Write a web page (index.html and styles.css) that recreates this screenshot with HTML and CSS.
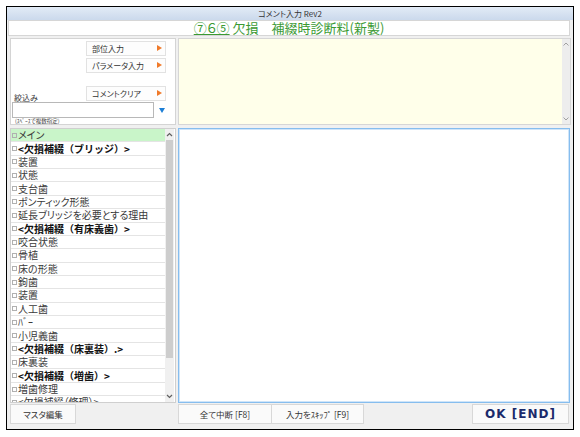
FILE: index.html
```html
<!DOCTYPE html>
<html lang="ja">
<head>
<meta charset="utf-8">
<link rel="stylesheet" href="styles.css">
</head>
<body>
<div class="window">
  <div class="titlebar">コメント入力 Rev2</div>
  <div class="header"><span class="u">⑦６⑤</span> 欠損　補綴時診断料(新製)</div>
  <div class="main">
    <div class="left">
      <div class="tools">
        <div class="tbtn">部位入力<span class="tri"></span></div>
        <div class="tbtn second">パラメータ入力<span class="tri"></span></div>
        <div class="filter-top">
          <span class="lbl">絞込み</span>
          <div class="tbtn">コメントクリア<span class="tri"></span></div>
        </div>
        <div class="inputrow"><div class="input"></div><span class="dtri"></span></div>
        <div class="hint">(ｽﾍﾟｰｽで複数指定)</div>
      </div>
      <div class="list">
        <div class="items">
          <div class="row sel"><i class="cb"></i>メイン</div>
          <div class="row b"><i class="cb"></i>&lt;欠損補綴（ブリッジ）&gt;</div>
          <div class="row"><i class="cb"></i>装置</div>
          <div class="row"><i class="cb"></i>状態</div>
          <div class="row"><i class="cb"></i>支台歯</div>
          <div class="row"><i class="cb"></i>ポンティック形態</div>
          <div class="row"><i class="cb"></i>延長ブリッジを必要とする理由</div>
          <div class="row b"><i class="cb"></i>&lt;欠損補綴（有床義歯）&gt;</div>
          <div class="row"><i class="cb"></i>咬合状態</div>
          <div class="row"><i class="cb"></i>骨植</div>
          <div class="row"><i class="cb"></i>床の形態</div>
          <div class="row"><i class="cb"></i>鉤歯</div>
          <div class="row"><i class="cb"></i>装置</div>
          <div class="row"><i class="cb"></i>人工歯</div>
          <div class="row"><i class="cb"></i>ﾊﾞｰ</div>
          <div class="row"><i class="cb"></i>小児義歯</div>
          <div class="row b"><i class="cb"></i>&lt;欠損補綴（床裏装）.&gt;</div>
          <div class="row"><i class="cb"></i>床裏装</div>
          <div class="row b"><i class="cb"></i>&lt;欠損補綴（増歯）&gt;</div>
          <div class="row"><i class="cb"></i>増歯修理</div>
          <div class="row"><i class="cb"></i>&lt;欠損補綴（修理）&gt;</div>
        </div>
        <div class="vscroll">
          <div class="arrow"><svg width="7" height="5" viewBox="0 0 7 5"><path d="M1 4 L3.5 1.5 L6 4" fill="none" stroke="#606060" stroke-width="1.2"/></svg></div>
          <div class="thumb"></div>
          <div class="fill"></div>
          <div class="arrow"><svg width="7" height="5" viewBox="0 0 7 5"><path d="M1 1 L3.5 3.5 L6 1" fill="none" stroke="#606060" stroke-width="1.2"/></svg></div>
        </div>
      </div>
    </div>
    <div class="right">
      <div class="memo">
        <div class="memo-area"></div>
        <div class="mscroll">
          <div class="marrow"><svg width="6" height="4" viewBox="0 0 6 4"><path d="M0.5 3.5 L3 1 L5.5 3.5" fill="none" stroke="#a0a0a0" stroke-width="1"/></svg></div>
          <div class="fill"></div>
          <div class="marrow"><svg width="6" height="4" viewBox="0 0 6 4"><path d="M0.5 0.5 L3 3 L5.5 0.5" fill="none" stroke="#a0a0a0" stroke-width="1"/></svg></div>
        </div>
      </div>
      <div class="editor"></div>
    </div>
  </div>
  <div class="footer">
    <div class="fbtn masta">マスタ編集</div>
    <div class="fbtn chudan">全て中断 [F8]</div>
    <div class="fbtn skip">入力をｽｷｯﾌﾟ [F9]</div>
    <div class="fbtn ok">OK [END]</div>
  </div>
</div>
</body>
</html>
```

FILE: styles.css
```css
* { box-sizing: border-box; }
body {
  margin: 0;
  padding: 6px 0 0 6px;
  background: #fff;
  font-family: "Noto Sans CJK JP", "Noto Sans", sans-serif;
  font-feature-settings: "palt";
  color: #222;
}
.window {
  width: 568px;
  height: 424px;
  border: 1px solid #000;
  background: #f0f0f0;
  display: flex;
  flex-direction: column;
}
.titlebar {
  height: 13px;
  background: linear-gradient(#e2ebf6, #cbd9ec);
  font-size: 8px;
  line-height: 13px;
  text-align: center;
  color: #333;
}
.header {
  height: 16px;
  margin: 0 3px 0 1px;
  background: #fff;
  border: 1px solid #d6d6d6;
  color: #3b9a33;
  font-size: 13px;
  line-height: 14px;
  text-align: center;
  white-space: nowrap;
}
.header .u { text-decoration: underline; }
.main {
  display: flex;
  gap: 2px;
  padding: 2px 2px 0 3px;
  height: 367px;
}
.left {
  width: 166px;
  display: flex;
  flex-direction: column;
  gap: 3px;
}
.right {
  flex: 1;
  display: flex;
  flex-direction: column;
  gap: 3px;
}
.tools {
  height: 87px;
  background: #fff;
  border: 1px solid #d4d4d4;
  padding: 2px 9px 0 1px;
  display: flex;
  flex-direction: column;
}
.tbtn {
  align-self: flex-end;
  width: 80px;
  height: 15px;
  border: 1px solid #e2e2e2;
  background: #fdfdfd;
  font-size: 8px;
  line-height: 13px;
  padding-left: 5px;
  position: relative;
  color: #333;
}
.tbtn.second { margin-top: 2px; }
.tri {
  position: absolute;
  right: 3px;
  top: 3px;
  width: 0;
  height: 0;
  border-left: 5px solid #f07a2a;
  border-top: 3.5px solid transparent;
  border-bottom: 3.5px solid transparent;
}
.filter-top {
  margin-top: 13px;
  display: flex;
  justify-content: space-between;
  align-items: flex-end;
}
.lbl {
  font-size: 8px;
  line-height: 9px;
  padding-left: 2px;
  color: #333;
  margin-bottom: -1px;
}
.inputrow {
  margin-top: 1px;
  display: flex;
  align-items: center;
}
.input {
  width: 142px;
  height: 16px;
  background: #fff;
  border: 1px solid #b8b8b8;
}
.dtri {
  margin-left: 5px;
  width: 0;
  height: 0;
  border-top: 5px solid #1d7fd6;
  border-left: 3.5px solid transparent;
  border-right: 3.5px solid transparent;
}
.hint {
  font-size: 5.5px;
  line-height: 7px;
  padding-left: 3px;
  color: #444;
  white-space: nowrap;
}
.list {
  flex: 1;
  background: #fff;
  border: 1px solid #cfcfcf;
  display: flex;
  overflow: hidden;
}
.items {
  flex: 1;
  overflow: hidden;
}
.row {
  height: 13.37px;
  border-bottom: 1px solid #e4e4e4;
  font-size: 10px;
  line-height: 12px;
  white-space: nowrap;
  color: #3a3a3a;
  display: flex;
  align-items: center;
  padding-left: 1px;
}
.row.sel { background: #c9f5c9; }
.row.b {
  font-weight: bold;
  color: #111;
  font-feature-settings: normal;
}
.cb {
  display: inline-block;
  width: 5px;
  height: 5px;
  border: 1px solid #b0b0b0;
  margin-right: 1px;
  flex: none;
}
.vscroll {
  width: 9px;
  background: #f0f0f0;
  display: flex;
  flex-direction: column;
  align-items: center;
  margin-right: 1px;
}
.arrow {
  height: 11px;
  display: flex;
  align-items: center;
  justify-content: center;
}
.thumb {
  width: 7px;
  height: 218px;
  background: #cdcdcd;
}
.fill { flex: 1; }
.memo {
  height: 87px;
  border: 1px solid #d6d6d6;
  background: #ffffea;
  display: flex;
}
.memo-area { flex: 1; }
.mscroll {
  width: 8px;
  background: #ededed;
  display: flex;
  flex-direction: column;
  align-items: center;
}
.marrow {
  height: 10px;
  display: flex;
  align-items: center;
  justify-content: center;
}
.editor {
  flex: 1;
  background: #fff;
  border: 1px solid #86bdee;
  box-shadow: inset 0 0 0 1px #cfe5f9;
  margin-right: 1px;
}
.footer {
  height: 26px;
  display: flex;
  padding: 1px 3px 0 3px;
}
.fbtn {
  height: 20px;
  border: 1px solid #d8d8d8;
  background: #fafafa;
  font-size: 8.5px;
  display: flex;
  align-items: center;
  justify-content: center;
  color: #333;
  white-space: nowrap;
}
.masta { width: 66px; }
.chudan { width: 94px; margin-left: 102px; }
.skip { width: 92px; border-left: none; }
.ok {
  width: 97px;
  margin-left: auto;
  margin-right: 1px;
  font-size: 12px;
  font-weight: bold;
  color: #1b2a6b;
  letter-spacing: 1px;
  font-family: "DejaVu Sans", "Noto Sans CJK JP", sans-serif;
}
```
